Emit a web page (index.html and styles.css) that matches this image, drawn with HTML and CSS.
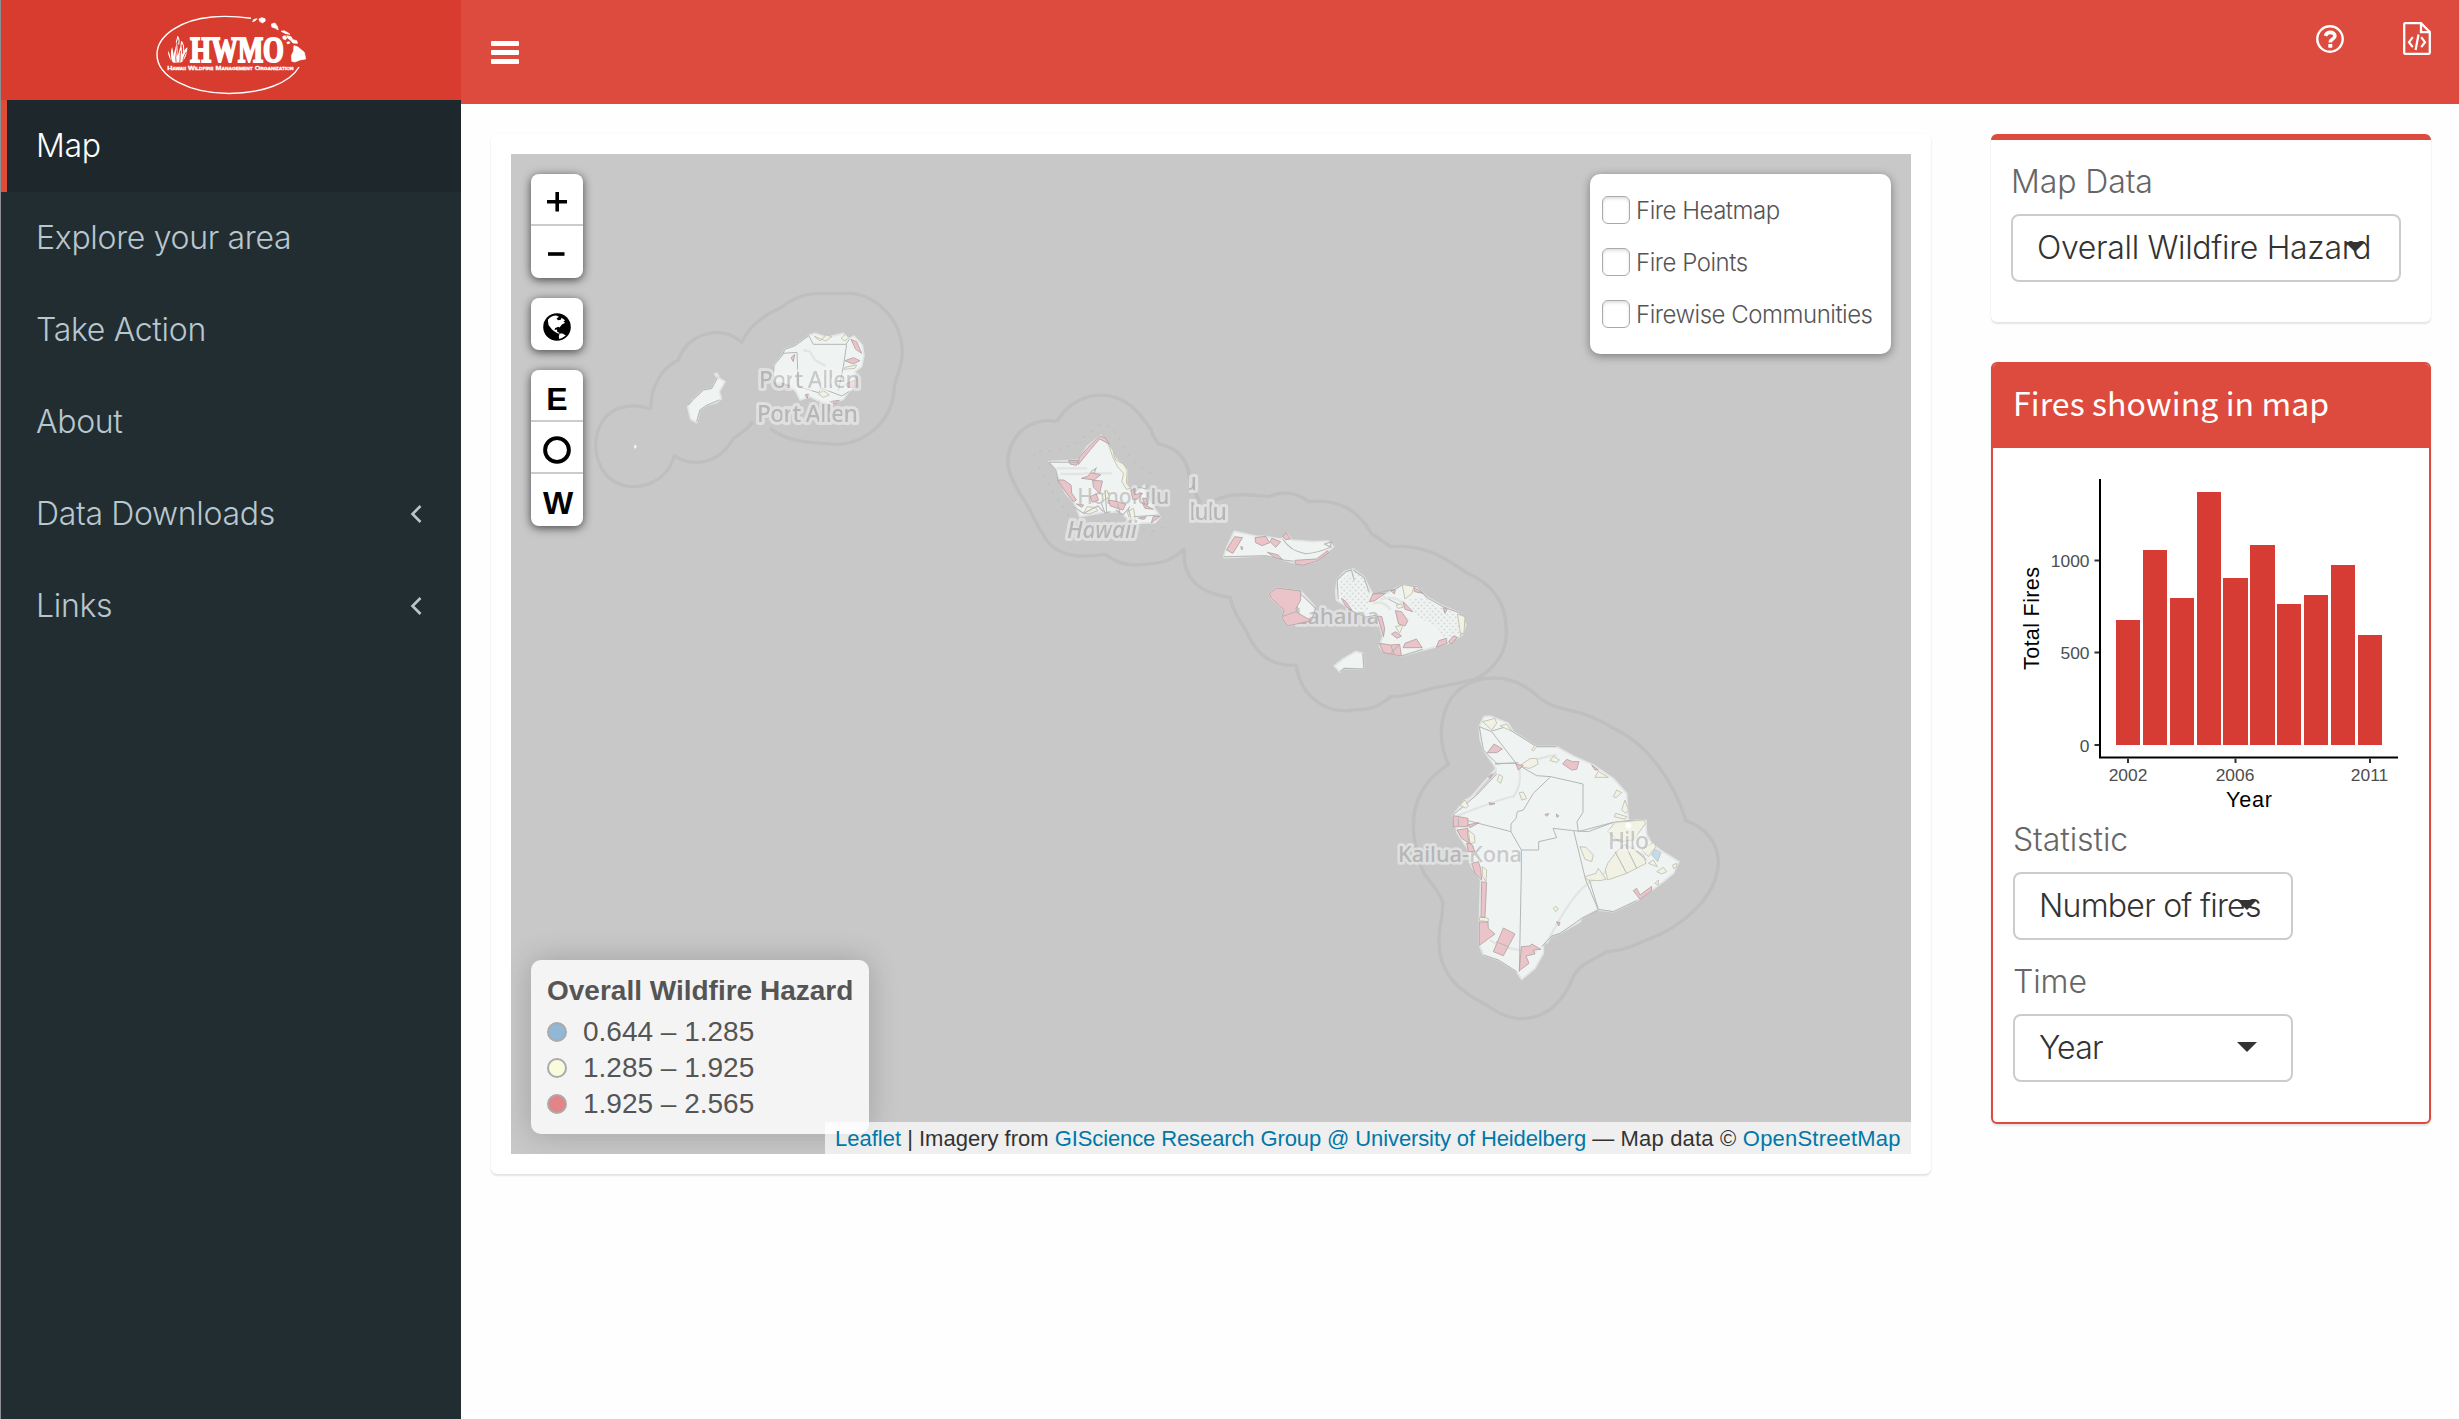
FILE: index.html
```html
<!DOCTYPE html>
<html lang="en">
<head>
<meta charset="utf-8">
<title>Hawaii Wildfire Management Organization</title>
<link rel="stylesheet" href="styles.css">
</head>
<body>
<div class="app">
  <aside class="sidebar">
    <div class="brand">
      <svg class="logo" viewBox="155 12 154 86" width="154" height="86">
        <g fill="none" stroke="#fff" stroke-width="1.4">
          <path d="M251 18.200 C238 16.500 222 16 212 17 C182 19.500 157 35 157 54.500 C157 77 190 93.500 229 93.500 C262 93.500 290 83 299 67"/>
        </g>
        <g transform="scale(.35714 .33333)" fill="#fff">
          <path d="M707 65l4-7 9-2-5 6zM725 57l8-4 9 3 1 7-8 6-8-5zM760 72l10-3 7 11 2 10-8-5-10-4zM787 94l8-2 11 6 6 5-12-2zM792 109l7-2 4 7-4 6-7-4zM803 107l12 3 5 9 11 3 2 8-13-1-5-7-10-8zM803 127l7-2 2 4-7 3zM823 137l10 3 8 7 11 10 4 20-16 3-14 6-9-2-1-17 6-14z" stroke="#fff" stroke-width="2"/>
          <path d="M486 188c-12-9-15-24-16-36 5 8 7 13 9 22 0-12-2-20 3-33 1 10 5 17 4 29 2-18 6-27 9-43 6 14 2 26 2 40 5-10 4-18 9-28 4 10 3 18 5 25 3-10 5-16 14-22-2 16-2 30-16 45z"/>
          <path d="M494 128C492 120 499 118 497 109C502 117 503 124 500 134M508 148C504 138 509 132 508 124C514 133 516 143 513 156" fill="none" stroke="#fff" stroke-width="3"/>
          <path d="M481 186c-4-14-3-17-5-30M493 186c-4-20 5-32 3-54M503 186c3-14 0-20 3-34M512 184c2-12 4-18 10-28" stroke="#d73c2e" stroke-width="2.500" fill="none"/>
          <text class="logo-name" x="533" y="187" textLength="262" lengthAdjust="spacingAndGlyphs">HWMO</text>
          <text class="logo-sub" x="468" y="210" textLength="354" lengthAdjust="spacingAndGlyphs">Hawaii Wildfire Management Organization</text>
        </g>
      </svg>
    </div>
    <nav class="menu">
      <a class="item active">Map</a>
      <a class="item">Explore your area</a>
      <a class="item">Take Action</a>
      <a class="item">About</a>
      <a class="item">Data Downloads<svg class="angle" viewBox="0 0 12 20" width="12" height="20"><path d="M10.500 3L2.500 11L10.500 19"/></svg></a>
      <a class="item">Links<svg class="angle" viewBox="0 0 12 20" width="12" height="20"><path d="M10.500 3L2.500 11L10.500 19"/></svg></a>
    </nav>
  </aside>
  <div class="main">
    <header class="topbar">
      <div class="burger"><i></i><i></i><i></i></div>
      <div class="tools">
        <svg viewBox="0 0 28 28" width="28" height="28"><circle cx="14" cy="14" r="12.700" fill="none" stroke="#fff" stroke-width="2.400"/><path d="M9.400 10.900C10.400 8.300 12 7.400 14.200 7.400C17 7.400 18.900 9 18.900 11.100C18.900 14.400 14.300 13.800 14.300 17.400" fill="none" stroke="#fff" stroke-width="3.600"/><rect x="12.300" y="19" width="4" height="3.800" rx=".5" fill="#fff"/></svg>
        <svg viewBox="0 0 28 33" width="28" height="33"><path d="M1.200 2.200Q1.200 1.200 2.200 1.200H18L26.800 10V30.800Q26.800 31.800 25.800 31.800H2.200Q1.200 31.800 1.200 30.800ZM18 1.500V10.200H26.500" fill="none" stroke="#fff" stroke-width="2.300"/><path d="M9.800 15.200L6 20.200L9.800 25.200M18.200 15.200L22 20.200L18.200 25.200M15.500 12.500L12.600 28" fill="none" stroke="#fff" stroke-width="2.200"/></svg>
      </div>
    </header>
    <main class="content">
      <section class="map-card">
        <div class="map">
          <svg class="tiles" viewBox="511 154 1400 1000" width="1400" height="1000">
            <defs>
              <pattern id="dots" width="16" height="18" patternUnits="userSpaceOnUse"><circle cx="4" cy="4.500" r="3" fill="#d3d7d6"/><circle cx="12" cy="13.500" r="3" fill="#d3d7d6"/></pattern>
              <clipPath id="east"><rect x="1189" y="460" width="100" height="80"/></clipPath>
            </defs>
            <!-- Kauai and Niihau -->
            <g transform="translate(560 270) scale(.33333)">
              <path class="sea" d="M272 417C225 400 160 405 130 450C90 510 105 590 155 630C225 675 320 640 343 557C400 595 480 580 520 505C545 490 560 480 580 455M630 475C680 515 750 520 830 523C920 520 1000 450 1003 350C1010 310 1027 290 1027 245C1025 150 950 75 870 70H770C730 72 690 90 660 115C610 135 570 165 545 217C520 195 500 187 470 187C410 190 370 225 355 270C310 290 272 345 272 417"/>
              <path class="land" d="M383 410L400 388L430 360L455 355L473 322L495 335L478 365L484 386L470 398L442 405L420 420L410 458L392 448ZM464 312L470 310 476 318 470 320Z"/>
              <path class="land" d="M640 325L642 285L668 254L674 238L705 227L747 196L765 190L800 202L850 190L868 206L882 198L907 225L912 255L905 290L885 305V350L866 365L850 388L815 402L775 392L750 380L720 390L708 365L690 350L645 335Z"/>
              <path class="dot" d="M221 530L225 523L231 530L225 537Z"/>
              <path class="road" d="M730 240L750 245L765 270L797 287" />
              <path class="line" d="M747 198L760 223H858L868 208M860 223L850 290L835 362M670 250L711 247L715 350L775 368L785 355L845 378L866 365M640 325L642 285L668 254L674 238L705 227L747 196M384 405L400 388L430 360L455 355L473 322M410 455L420 420L442 405L478 390"/>
              <path class="high" d="M873 208L890 215 905 250 887 238ZM855 272L880 263 900 272 880 282ZM857 342L885 330V352L865 352ZM662 338L690 347 672 346ZM693 263L704 253 700 275ZM808 395L838 391 825 402ZM735 375L745 372 742 385Z"/>
              <path class="mid" d="M763 199L785 208 780 213ZM785 208L800 195 815 200 798 213ZM843 205L857 192 866 203 855 213ZM855 292L890 285 885 295 852 298ZM775 372L790 362 808 375 790 382Z"/>
            </g>
            <!-- Oahu, Molokai, Lanai, Maui, Kahoolawe -->
            <g transform="translate(980 370) scale(.35714 .33333)">
              <path class="sea" d="M215 155C150 140 75 190 78 285C85 330 100 345 110 370C140 410 150 450 175 490C200 545 250 570 350 553C380 575 400 585 440 585C480 580 530 585 572 535M572 535C565 620 610 670 700 682C715 750 745 770 750 795C780 860 820 888 885 886C900 990 980 1035 1050 1019C1100 1020 1120 1005 1150 980C1210 980 1250 955 1290 950L1380 930C1450 900 1480 830 1473 770C1470 690 1430 640 1365 610C1320 580 1260 520 1150 530C1130 515 1110 500 1095 490C1060 420 1000 385 922 395C890 370 850 360 808 380C760 375 700 365 655 393M617 400C605 370 590 350 583 300C570 250 540 230 500 222C485 200 480 190 480 180C460 150 440 120 420 105C350 50 260 75 215 155"/>
              <path class="reef" d="M150 260L155 243L210 243L270 220L340 160L370 175L430 275L490 320M165 290L200 360L240 420L260 470L350 450L480 485L520 470"/>
              <path class="land" d="M192 275L275 270L300 230L338 196L360 225L375 260L412 300L410 340L430 375L460 345L468 385L505 440L490 458L430 460L390 425L340 428L280 440L262 395L240 370L218 320L212 298Z"/>
              <path class="road" d="M215 295H300M290 310H370M225 312H290"/>
              <g class="place-in"><text x="272" y="403" textLength="258" lengthAdjust="spacingAndGlyphs">Honolulu</text></g>
              <path class="high" d="M248 271L275 272 270 286 252 282ZM275 284L278 262 300 235 335 198 350 203 362 222 335 207 310 238ZM217 330L235 330 255 345 257 370 270 390 262 395 243 370ZM284 325L303 318 310 308 338 314 320 330ZM315 331L343 333 335 370 318 352ZM308 380L325 372 332 390 315 397ZM360 390L385 395 408 403 400 420 365 408ZM422 360L430 358 432 374 455 370 440 388 428 388ZM455 400L485 418 462 415ZM480 458L485 440 505 438ZM270 402L290 405 285 412ZM440 445L465 440 460 448ZM455 385L465 385 470 405 460 400Z"/>
              <path class="mid" d="M360 222L372 240 378 268 402 283 412 300 410 340 422 355 410 358 397 335 402 310 385 290 372 262ZM343 375L355 360 362 380 345 392ZM290 430L300 410 322 412 330 422 305 432ZM412 425L430 415 435 450 420 450Z"/>
              <path class="line" d="M192 277H275M192 277L212 300L218 328M310 305L325 295 318 312M440 350L465 357 470 343M350 360L355 430 M262 410L290 430L330 408L345 425M380 420L400 435L420 410M430 440L500 435M340 400L350 430L365 425M385 400L392 430M415 415L425 455"/>
              <path class="land" d="M683 558L690 535L712 484L772 498L800 500L845 507L860 490L872 510L930 515L975 513L990 530L940 575L900 585L850 570L800 557L685 563Z"/>
              <path class="high" d="M690 540L713 500 735 503 708 550ZM770 503L800 499 811 518 790 527 772 518ZM817 505L842 515 828 532 812 515ZM848 500L857 487 869 507 855 509ZM805 547L835 555 848 570 825 562ZM882 571L942 567 973 542 976 548 942 574 903 586 883 582ZM730 530L736 532 733 540Z"/>
              <path class="line" d="M848 508Q870 545 912 551Q950 548 985 530M683 560L800 557L850 570L880 574M965 522L985 515 980 530Z"/>
              <path class="land" d="M810 670L830 654L898 663L938 710L925 750L862 768L845 742L852 720L815 685Z"/>
              <path class="land" d="M996 665L1000 630L1020 605L1045 597L1075 620L1088 650L1100 672L1140 670L1165 655L1180 645L1225 650L1250 680L1290 705L1345 730L1360 765L1350 795L1310 820L1270 832L1180 858L1130 845L1118 828L1128 800L1112 740L1080 742L1050 728L1020 705L998 690Z"/>
              <path fill="url(#dots)" d="M1005 640L1045 600L1075 625L1092 675L1085 735L1040 720L1010 680ZM1195 690L1240 680L1290 712L1345 735L1350 790L1300 810L1280 770L1225 740Z"/>
              <g class="place-in"><text x="882" y="763" textLength="236" lengthAdjust="spacingAndGlyphs">Lahaina</text></g>
              <path class="high" d="M810 670L830 654 898 663 898 690 885 715 888 728 928 752 895 760 860 768 845 742 852 720 815 685Z"/>
              <path class="line" d="M898 672L940 715L928 750M845 740L885 725L890 710"/>
              <path class="line" d="M1003 688L1000 630L1025 605L1040 600L1048 632M1045 600L1075 622L1090 668M1035 720L1080 742L1110 735M1100 672L1165 657L1180 645L1225 650L1250 682L1300 712L1345 730L1357 765L1345 798M1130 680L1185 710M1180 858L1240 838"/>
              <path class="road" d="M1120 690Q1160 670 1195 710M1100 700Q1130 690 1150 720"/>
              <path class="high" d="M1090 695L1100 672 1135 670 1105 692ZM1012 685L1025 695 1042 722 1025 710ZM1113 738L1125 740 1133 775 1130 800ZM1163 722L1180 725 1198 752 1190 768 1172 762ZM1185 695L1212 725 1190 718ZM1152 792L1163 785 1180 798 1168 805ZM1118 820L1150 825 1175 823 1180 858 1130 848ZM1190 820L1222 807 1238 833H1185ZM1278 832L1285 812 1305 805 1308 820ZM1312 815L1325 798 1337 802 1320 822ZM1213 650L1240 670 1217 665ZM1297 713L1308 718 1302 730ZM1150 662L1163 660 1160 672Z"/>
              <path class="mid" d="M1182 643L1215 650 1210 670 1190 687ZM1337 732L1358 740 1355 790 1345 790ZM1163 770L1185 765 1175 790ZM1165 705L1180 702 1185 712 1170 715Z"/>
              <path class="line" d="M1150 825L1160 855M1175 823L1150 850"/>
              <path class="land" d="M992 888L1015 868L1052 845L1072 850L1075 897L1020 895L1008 906Z"/>
              <path class="line" d="M1072 850L1075 897L1020 895L1008 905"/>
            </g>
            <!-- Hawaii -->
            <g transform="translate(1380 650) scale(.33333)">
              <path class="sea" d="M205 343C165 260 175 120 300 88C370 75 430 95 480 145C540 190 600 170 700 235C800 280 880 390 918 512C980 535 1015 580 1015 640C1010 740 910 830 800 870C740 895 730 900 680 905C640 930 600 940 580 980C540 1080 480 1110 410 1105C370 1100 350 1085 320 1065C230 1020 160 960 180 830C190 790 188 770 188 755C160 690 130 690 118 630C80 510 100 410 205 343Z"/>
              <path class="land" d="M298 230L312 200L330 198L385 220L400 245L470 290L530 290L580 318L640 345L700 385L740 430L745 510L798 512L800 565L840 600L897 635L880 670L850 695L810 725L770 752L700 785L650 780L605 805L600 815L540 850L515 858L490 885V910L465 955L425 988L410 965L355 930L310 915L298 885V810L302 690L275 650L265 600L232 550L219 495L255 450L290 435L350 370L345 350L310 300L300 265Z"/>
              <path class="road" d="M225 500Q380 440 400 440Q430 400 415 345M500 880Q580 720 640 690Q700 660 740 590L745 530M240 480L350 355M330 870Q370 900 470 905M430 345Q480 320 530 315"/>
              <g class="place-in"><text x="54" y="636" textLength="372" lengthAdjust="spacingAndGlyphs">Kailua-Kona</text></g>
              <path class="line" d="M298 230L335 245L410 342L470 377L512 380L609 402V487L591 515L595 545L700 517L762 510M335 243L380 230L395 243L470 290L530 290M345 340H410M512 380L460 430L430 480L412 485L408 505L393 522V545L264 512M393 545L424 600V660L418 965M424 600H476V575L530 563L519 535L581 542L625 545L700 517M581 542L617 690L655 780M628 690L655 778L700 785L770 752M655 780L605 805L540 850L515 858L485 890M219 495L290 435L350 372M355 345L310 300L298 230M310 915L355 930L410 965"/>
              <path class="mid" d="M308 215L345 205 350 220 335 240ZM360 228L380 222 395 243ZM415 350L450 326 470 325 475 342 450 355ZM510 332L520 318 538 330 530 337ZM455 300L465 285 470 290 460 303ZM352 392L357 373 368 380 362 400ZM418 428L430 426 440 446 425 450ZM240 465L255 450 265 468 258 475ZM645 382L655 364 685 382ZM700 440L710 420 725 428 708 443ZM703 500L707 490 740 500 735 508ZM725 480L735 450 745 480 737 490ZM683 545L705 517 790 510 797 520 760 570 718 575ZM676 660L683 640 710 605 735 583 790 615 798 640 740 670 683 690ZM785 600L820 577 828 590 805 620ZM600 590L618 592 640 615 635 635 615 628ZM615 680L648 670 655 655 678 688 660 692 622 690ZM830 665L850 652 860 665 845 672ZM265 540L283 555 285 578 270 580ZM300 800L325 805V815L298 812ZM307 650L320 660 318 695 308 680ZM520 775L527 768 535 778 527 785ZM878 645L890 640 890 652 880 655ZM805 640L820 630 832 650ZM825 700L835 690 835 705Z"/>
              <path class="line" d="M705 605L740 670M735 583L770 655M765 600L800 630"/>
              <path class="high" d="M220 497L264 505V530H220ZM231 540L264 535 262 550 268 580 245 565ZM265 524L297 518 270 533ZM260 580L275 582 285 605 265 605ZM275 640L295 635 302 655 305 690 285 670ZM305 695L320 698 315 802H303ZM298 816H324L325 835 345 852 298 886ZM370 834L405 852 370 917 340 905ZM424 890L450 888 455 882 483 898 460 900 465 912 438 918 447 940 418 962ZM322 308L342 282 367 297 350 308ZM408 342L430 347 415 360ZM548 342L560 328 578 335 597 335 590 358 575 360ZM760 722L770 715 780 735 815 709 815 722 780 748ZM635 345L655 360 645 360ZM325 380L337 372 330 385ZM530 815L540 818 536 828ZM495 493L507 491 500 499ZM529 492L537 498 531 502ZM327 458L345 461 330 465Z"/>
              <path class="line" d="M348 875L385 890M235 505V528M345 342L415 338"/>
              <path class="low" d="M815 615L825 597 843 608 833 635Z"/>
              <circle cx="745" cy="527" r="9" fill="#fff"/>
            </g>
            <g class="place">
              <text x="759" y="388" textLength="101">Port Allen</text>
              <text x="757" y="422" textLength="101">Port Allen</text>
              <g clip-path="url(#east)"><text x="1105" y="490" textLength="92">Honolulu</text><text x="1135" y="520" textLength="92">Honolulu</text></g>
              <text class="region" x="1067" y="538" textLength="70">Hawaii</text>
              <text x="1608" y="849" textLength="41">Hilo</text>
            </g>
          </svg>
          <div class="controls">
            <div class="bar">
              <span><svg viewBox="0 0 20 20" width="20" height="20"><path d="M0 9.800H20M10.200 0V19.500" stroke="#000" stroke-width="3.600"/></svg></span>
              <span><svg viewBox="0 0 20 20" width="20" height="20"><path d="M1 9H17.500" stroke="#000" stroke-width="3.600"/></svg></span>
            </div>
            <div class="bar"><span><svg viewBox="0 0 28 28" width="28" height="28"><circle cx="14" cy="14" r="13.800"/><path fill="#fff" d="M5 6.500Q8.500 2.800 13 2.600L16 3.800L13.500 5.500L15 7.200L17.800 6.800L18.500 4.800L22 7.200L20.500 8.800L22.200 9.800L19 11.500L16.500 14.500L15.500 13.800L12.200 15L11.500 17L14 16.500L14.300 19L16.500 19.800L15.500 20.800L11.800 18.800L9 16.500L5.500 12L5 8.500ZM16.500 20.500L19.500 20.500L22.800 22.500L19 25L16.200 26L15.800 23.500Z"/></svg></span></div>
            <div class="bar">
              <span class="e">E</span>
              <span><svg viewBox="0 0 28 28" width="28" height="28"><circle cx="14" cy="14" r="11.900" fill="none" stroke="#000" stroke-width="3.900"/></svg></span>
              <span class="w">W</span>
            </div>
          </div>
          <div class="layers">
            <label><i class="check"></i>Fire Heatmap</label>
            <label><i class="check"></i>Fire Points</label>
            <label><i class="check"></i>Firewise Communities</label>
          </div>
          <div class="legend">
            <strong>Overall Wildfire Hazard</strong>
            <div><i class="c-low"></i>0.644 – 1.285</div>
            <div><i class="c-mid"></i>1.285 – 1.925</div>
            <div><i class="c-high"></i>1.925 – 2.565</div>
          </div>
          <div class="credits"><a>Leaflet</a> | Imagery from <a class="source">GIScience Research Group @ University of Heidelberg</a> — <span class="data">Map data © <a>OpenStreetMap</a></span></div>
        </div>
      </section>
      <aside class="panels">
        <section class="panel data-panel">
          <div class="label">Map Data</div>
          <div class="select wide"><span>Overall Wildfire Hazard</span></div>
        </section>
        <section class="panel fires-panel">
          <h3>Fires showing in map</h3>
          <div class="fires-body">
            <svg class="chart" viewBox="2013 468 396 350" width="396" height="350">
              <g fill="#d73c34">
                <rect x="2116" y="620" width="24" height="125"/><rect x="2143" y="550" width="24" height="195"/><rect x="2170" y="598" width="24" height="147"/><rect x="2197" y="492" width="24" height="253"/><rect x="2223" y="578" width="25" height="167"/><rect x="2250" y="545" width="25" height="200"/><rect x="2277" y="604" width="24" height="141"/><rect x="2304" y="595" width="24" height="150"/><rect x="2331" y="565" width="24" height="180"/><rect x="2358" y="635" width="24" height="110"/>
              </g>
              <path d="M2100 479V757.500M2099 757.500H2398" stroke="#000" stroke-width="2" fill="none"/>
              <path d="M2094.500 560.500H2099M2094.500 652.500H2099M2094.500 745H2099M2128 758.500V763M2235.500 758.500V763M2370 758.500V763" stroke="#333" stroke-width="2" fill="none"/>
              <g class="tick"><text x="2089.500" y="566.500" text-anchor="end">1000</text><text x="2089.500" y="658.500" text-anchor="end">500</text><text x="2089.500" y="751.500" text-anchor="end">0</text><text x="2128" y="781" text-anchor="middle">2002</text><text x="2235" y="781" text-anchor="middle">2006</text><text x="2369.500" y="781" text-anchor="middle">2011</text></g>
              <g class="axis"><text x="2249" y="807" text-anchor="middle" textLength="46">Year</text><text transform="translate(2039 618.500) rotate(-90)" text-anchor="middle" textLength="103">Total Fires</text></g>
            </svg>
            <div class="label stat">Statistic</div>
            <div class="select"><span>Number of fires</span></div>
            <div class="label time">Time</div>
            <div class="select"><span>Year</span></div>
          </div>
        </section>
      </aside>
    </main>
  </div>
</div>
</body>
</html>
```
FILE: styles.css
```css
* { box-sizing: border-box; }
body { margin: 0; background: #fefefe; font-family: "Inter", "Liberation Sans", sans-serif; font-weight: 270; font-size: 32px; color: #333; }
.app { display: flex; height: 1419px; }
.sidebar { width: 461px; background: #222d32; border-left: 1px solid #8b8f91; flex: none; }
.brand { height: 100px; background: #d73c2e; padding: 12px 0 0 154px; }
.logo { display: block; overflow: visible; }
.logo-name { font: bold 106px "Liberation Serif", serif; stroke: #fff; stroke-width: 6; }
.logo-sub { font: bold 17px "Liberation Sans", sans-serif; font-variant: small-caps; stroke: #fff; stroke-width: .8; }
.item { display: flex; align-items: center; justify-content: space-between; height: 92px; padding: 0 39px 2px 29px; border-left: 6px solid transparent; color: #b8c7ce; letter-spacing: -.32px; }
.item.active { background: #1e282c; border-color: #dd4b39; color: #fff; }
.angle { fill: none; stroke: #b8c7ce; stroke-width: 2.6; }
.main { flex: 1; }
.topbar { height: 104px; background: #dd4b3e; display: flex; justify-content: space-between; padding: 0 28px 0 30px; }
.burger { display: flex; flex-direction: column; gap: 4px; padding-top: 41px; }
.burger i { width: 28px; height: 5px; border-radius: 1px; background: #fff; }
.tools { display: flex; align-items: flex-start; gap: 59px; padding-top: 22px; }
.tools svg:first-child { margin-top: 3px; }
.content { display: flex; gap: 60px; padding: 30px 28px 0 30px; align-items: flex-start; }
.map-card { width: 1440px; height: 1040px; padding: 20px; border-radius: 6px; background: #fff; box-shadow: 0 2px 2px rgba(0,0,0,.1), 0 0 2px rgba(0,0,0,.05); }
.map { position: relative; width: 1400px; height: 1000px; background: #c8c8c8; overflow: hidden; }
.tiles { display: block; }
.sea { fill: none; stroke: #bfbfbf; stroke-width: 10; }
.reef { fill: none; stroke: #bebebe; stroke-width: 3; stroke-dasharray: 9 18; }
.land { fill: #eff3f2; stroke: #e2e5e4; stroke-width: 5; stroke-linejoin: round; }
.dot { fill: #eff3f2; }
.road { fill: none; stroke: #e2e5e4; stroke-width: 7; }
.line { fill: none; stroke: #b5b7b6; stroke-width: 3; }
.high { fill: #eac4c8; stroke: #b09fa1; stroke-width: 2.4; }
.mid { fill: #f1f2e3; stroke: #bfc0b2; stroke-width: 2.6; }
.low { fill: #c6d9e6; stroke: #b5bec4; stroke-width: 2; }
.place, .place-in { font: 500 23px "Noto Sans", sans-serif; fill: #a8a8a8; stroke: #f2f4f3; stroke-width: 6; stroke-linejoin: round; paint-order: stroke; opacity: .55; }
.place-in { font-size: 67px; stroke-width: 16; }
.region { font-style: italic; }
.controls { position: absolute; left: 20px; top: 20px; display: flex; flex-direction: column; gap: 20px; }
.bar { width: 52px; background: #fff; border-radius: 8px; box-shadow: 0 2px 10px rgba(0,0,0,.65); }
.bar span { display: flex; align-items: center; justify-content: center; height: 52px; border-bottom: 2px solid #ccc; font: bold 32px "Liberation Sans", sans-serif; color: #000; padding-top: 5px; }
.bar span:last-child { border-bottom: 0; }
.bar .e { padding-top: 8px; }
.bar .w { padding: 7px 0 0 2px; }
.layers { position: absolute; right: 20px; top: 20px; width: 301px; height: 180px; padding: 10px 12px; background: #fff; border-radius: 10px; box-shadow: 0 2px 10px rgba(0,0,0,.4); color: #555; font-size: 24px; letter-spacing: -.48px; }
.layers label { display: flex; align-items: center; height: 52px; gap: 6px; }
.check { width: 28px; height: 28px; border: 1px solid #aaa; border-radius: 6px; box-shadow: inset 0 2px 3px rgba(0,0,0,.12); }
.legend { position: absolute; left: 20px; top: 806px; width: 338px; height: 174px; padding: 13px 16px; background: rgba(255,255,255,.8); border-radius: 10px; box-shadow: 0 0 30px rgba(0,0,0,.2); color: #555; font: 28px/36px "Liberation Sans", sans-serif; }
.legend strong { display: block; margin-bottom: 5px; white-space: nowrap; }
.legend div { display: flex; align-items: center; gap: 16px; }
.legend i { width: 20px; height: 20px; border: 2px solid #aaa; border-radius: 50%; }
.c-low { background: #91b8d5; }
.c-mid { background: #fafbdc; }
.c-high { background: #e58488; }
.credits { position: absolute; right: 0; bottom: 0; width: 1086px; height: 32px; padding: 0 10px; background: rgba(255,255,255,.7); font: 22px/34px "Liberation Sans", sans-serif; white-space: nowrap; color: #333; }
.credits a { color: #0078a8; }
.source { letter-spacing: -.11px; }
.data { letter-spacing: .2px; }
.panels { width: 440px; display: flex; flex-direction: column; gap: 40px; }
.panel { background: #fff; border-radius: 6px; box-shadow: 0 2px 2px rgba(0,0,0,.1), 0 0 2px rgba(0,0,0,.05); }
.data-panel { height: 188px; border-top: 6px solid #dd4b3e; padding: 20px; }
.label { color: #666; line-height: 40px; letter-spacing: -.1px; padding-top: 2px; height: 40px; }
.select { position: relative; width: 280px; height: 68px; border: 2px solid #ccc; border-radius: 8px; padding: 0 24px; line-height: 63px; white-space: nowrap; letter-spacing: -.75px; }
.select.wide { width: 390px; margin-top: 14px; letter-spacing: -.32px; }
.select::after { content: ""; position: absolute; right: 34px; top: 26px; border: 10px solid transparent; border-top-color: #333; border-bottom: 0; }
.fires-panel { height: 762px; border: 2px solid #dd4b3e; overflow: hidden; }
.fires-panel h3 { margin: 0; height: 84px; padding-left: 20px; background: #dd4b3e; color: #fff; font: 400 32px/76px "Noto Sans CJK SC", sans-serif; letter-spacing: .1px; }
.fires-body { padding: 20px; }
.chart { display: block; }
.tick { font: 17.4px "Liberation Sans", sans-serif; fill: #4d4d4d; }
.axis { font: 21.6px "Liberation Sans", sans-serif; fill: #000; }
.stat { margin-bottom: 14px; }
.time { margin: 20px 0 14px; }
```
